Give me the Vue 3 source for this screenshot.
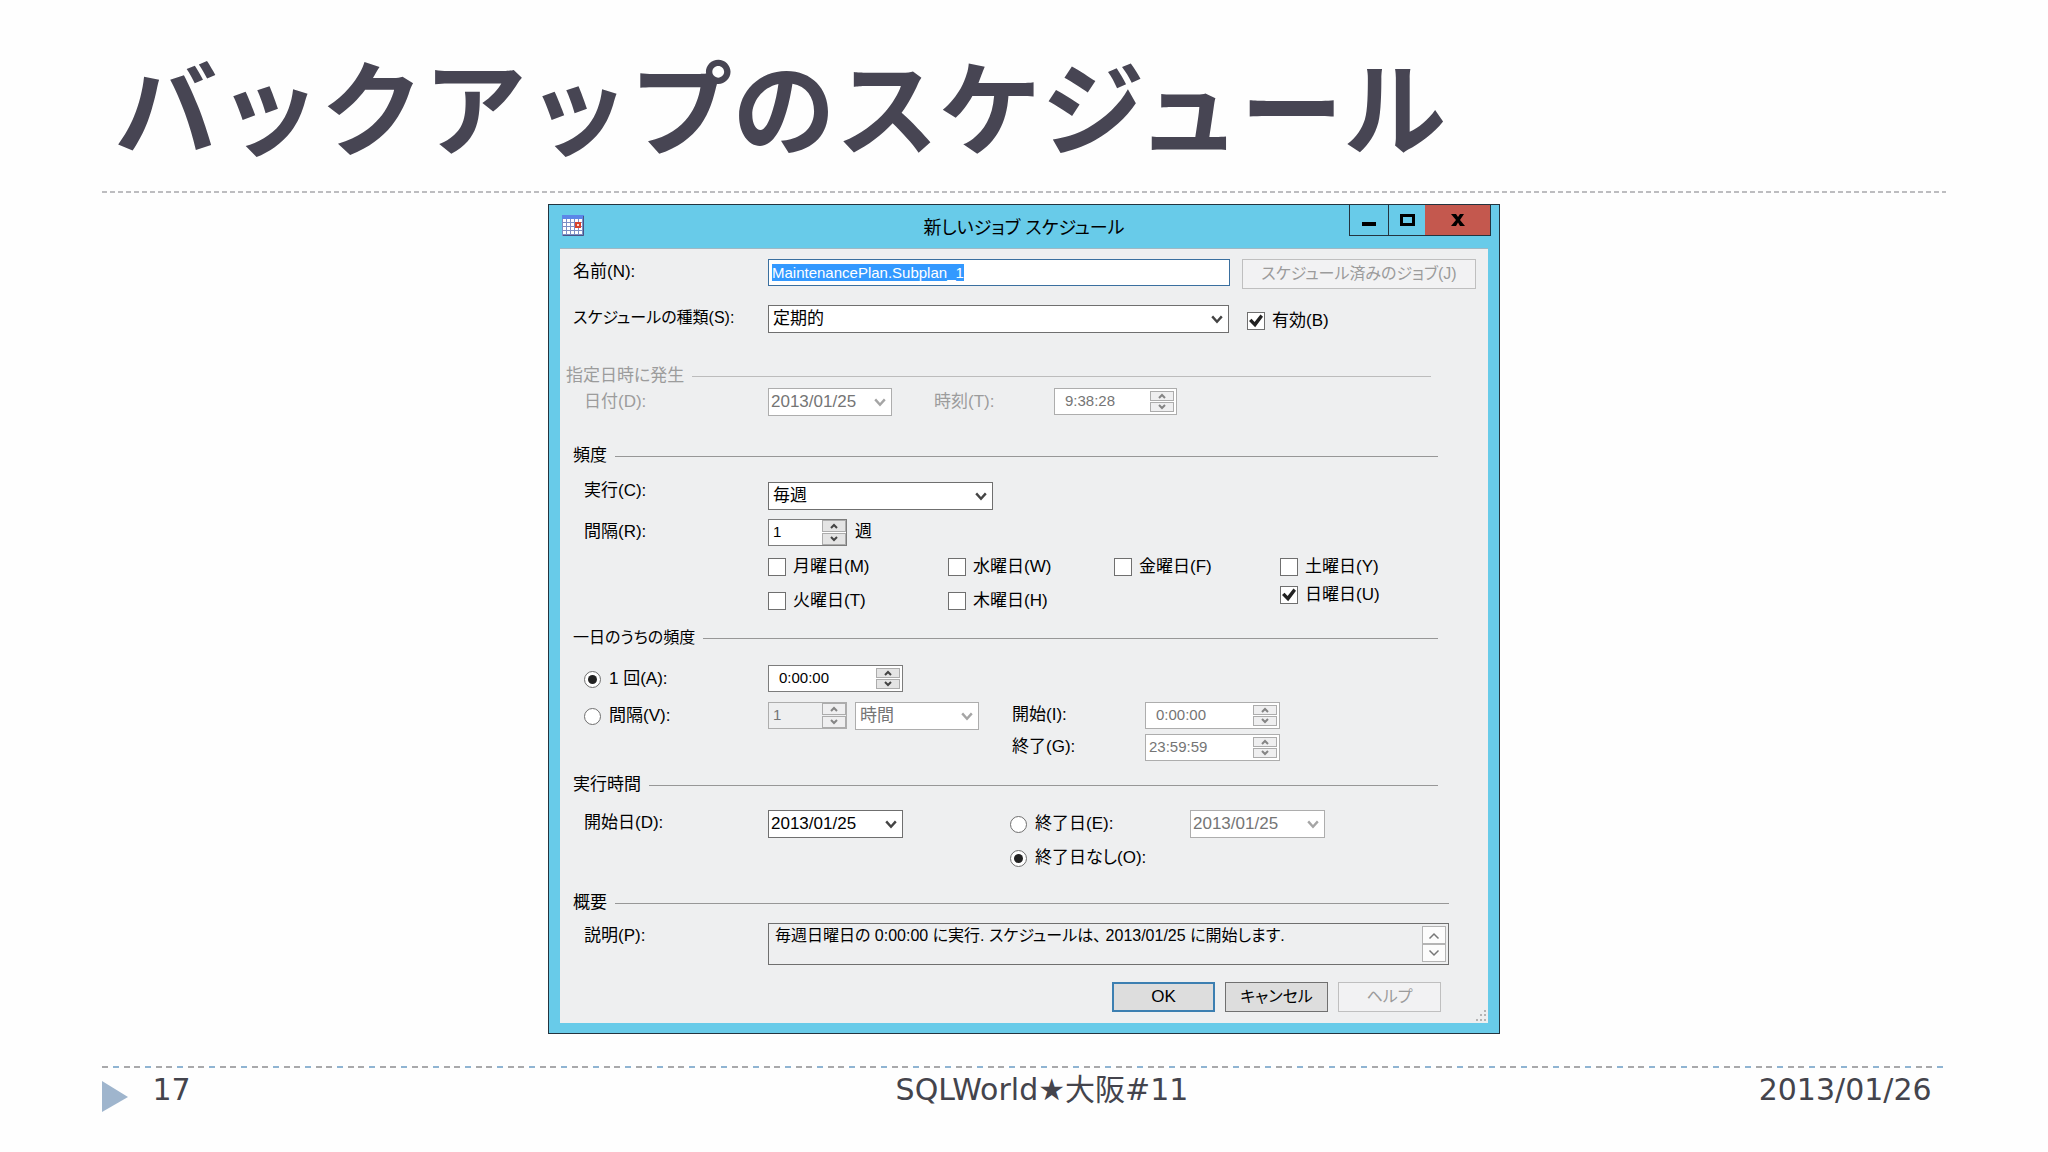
<template>
  <main class="slide">
    <header class="slide-head">
      <h1>バックアップのスケジュール</h1>
    </header>

    <section class="dialog" role="dialog" aria-labelledby="dialog-title">
      <header class="title-bar">
        <svg class="app-icon" viewBox="0 0 22 21" aria-hidden="true">
          <rect x="0" y="0" width="22" height="21" fill="#7d8fc4" />
          <rect x="0" y="0" width="22" height="4" fill="#5c86e8" />
          <g fill="#fff">
            <template v-for="row in 4" :key="row">
              <rect v-for="col in 5" :key="col" :x="col * 4 - 3" :y="row * 4" width="3" height="3" />
            </template>
          </g>
          <rect x="13" y="7" width="6" height="6" fill="#d8432c" />
          <rect x="15" y="9" width="2" height="2" fill="#ffd9c8" />
          <path d="M21.5 1V20.5H1" fill="none" stroke="#4a5384" />
        </svg>
        <h2 id="dialog-title">新しいジョブ スケジュール</h2>
        <div class="window-buttons">
          <button type="button" class="minimize" aria-label="最小化">
            <svg width="14" height="14" viewBox="0 0 14 14"><path d="M0 11H14" stroke="#000" stroke-width="4" /></svg>
          </button>
          <button type="button" class="maximize" aria-label="最大化">
            <svg width="15" height="12" viewBox="0 0 15 12"><rect x="1.5" y="1.5" width="12" height="9" fill="none" stroke="#000" stroke-width="3" /></svg>
          </button>
          <button type="button" class="close" aria-label="閉じる">
            <svg width="14" height="12" viewBox="0 0 14 12"><path d="M0 0H5L7 3L9 0H13L9 6L14 12H9L7 8.500L5 12H0L5 6Z" fill="#000" /></svg>
          </button>
        </div>
      </header>

      <form class="panel" @submit.prevent>
        <div class="row name-row">
          <label for="name">名前(N):</label>
          <input id="name" ref="nameRef" v-model="name" class="field name-field" type="text" />
          <button type="button" class="push jobs-button compact" disabled>スケジュール済みのジョブ(J)</button>
        </div>

        <div class="row type-row">
          <label class="compact" for="type">スケジュールの種類(S):</label>
          <div class="combo wide">
            <select id="type"><option>定期的</option></select>
            <svg class="chevron" viewBox="0 0 10 8"><path d="M1 1L5 5.500L9 1" /></svg>
          </div>
          <label class="tick enabled-tick"><input v-model="enabled" type="checkbox" />有効(B)</label>
        </div>

        <section class="once">
          <h3>指定日時に発生</h3>
          <div class="row date-row">
            <label class="sub" for="once-date">日付(D):</label>
            <div class="combo short disabled">
              <select id="once-date" class="date" disabled><option>2013/01/25</option></select>
              <svg class="chevron" viewBox="0 0 10 8"><path d="M1 1L5 5.500L9 1" /></svg>
            </div>
            <label class="time-label" for="once-time">時刻(T):</label>
            <div class="spin time disabled">
              <input id="once-time" type="text" value="9:38:28" disabled />
              <div class="steps">
                <button v-for="step in steps" :key="step.label" type="button" :aria-label="step.label" disabled>
                  <svg viewBox="0 0 8 6"><path :d="step.path" /></svg>
                </button>
              </div>
            </div>
          </div>
        </section>

        <section class="frequency">
          <h3>頻度</h3>
          <div class="row run-row">
            <label class="sub" for="run">実行(C):</label>
            <div class="combo medium">
              <select id="run"><option>毎週</option></select>
              <svg class="chevron" viewBox="0 0 10 8"><path d="M1 1L5 5.500L9 1" /></svg>
            </div>
          </div>
          <div class="row interval-row">
            <label class="sub" for="weeks">間隔(R):</label>
            <div class="spin count">
              <input id="weeks" type="text" value="1" />
              <div class="steps">
                <button v-for="step in steps" :key="step.label" type="button" :aria-label="step.label">
                  <svg viewBox="0 0 8 6"><path :d="step.path" /></svg>
                </button>
              </div>
            </div>
            <span class="unit">週</span>
          </div>
          <div class="days">
            <div v-for="(column, index) in dayColumns" :key="index" class="day-column">
              <label v-for="day in column" :key="day.label" class="tick">
                <input v-model="day.checked" type="checkbox" />{{ day.label }}
              </label>
            </div>
          </div>
        </section>

        <section class="daily">
          <h3 class="compact">一日のうちの頻度</h3>
          <div class="grid daily-grid">
            <label class="sub radio"><input v-model="dailyMode" type="radio" value="once" name="daily" />1 回(A):</label>
            <div class="spin time">
              <input type="text" value="0:00:00" aria-label="1 回の時刻" />
              <div class="steps">
                <button v-for="step in steps" :key="step.label" type="button" :aria-label="step.label">
                  <svg viewBox="0 0 8 6"><path :d="step.path" /></svg>
                </button>
              </div>
            </div>
          </div>
          <div class="grid daily-grid">
            <label class="sub radio"><input v-model="dailyMode" type="radio" value="every" name="daily" />間隔(V):</label>
            <div class="pair">
              <div class="spin count disabled">
                <input type="text" value="1" aria-label="間隔" disabled />
                <div class="steps">
                  <button v-for="step in steps" :key="step.label" type="button" :aria-label="step.label" disabled>
                    <svg viewBox="0 0 8 6"><path :d="step.path" /></svg>
                  </button>
                </div>
              </div>
              <div class="combo short disabled">
                <select aria-label="間隔の単位" disabled><option>時間</option></select>
                <svg class="chevron" viewBox="0 0 10 8"><path d="M1 1L5 5.500L9 1" /></svg>
              </div>
            </div>
            <label for="start-time">開始(I):</label>
            <div class="spin time disabled">
              <input id="start-time" type="text" value="0:00:00" disabled />
              <div class="steps">
                <button v-for="step in steps" :key="step.label" type="button" :aria-label="step.label" disabled>
                  <svg viewBox="0 0 8 6"><path :d="step.path" /></svg>
                </button>
              </div>
            </div>
          </div>
          <div class="grid daily-grid end-row">
            <label class="third" for="end-time">終了(G):</label>
            <div class="spin time full disabled">
              <input id="end-time" type="text" value="23:59:59" disabled />
              <div class="steps">
                <button v-for="step in steps" :key="step.label" type="button" :aria-label="step.label" disabled>
                  <svg viewBox="0 0 8 6"><path :d="step.path" /></svg>
                </button>
              </div>
            </div>
          </div>
        </section>

        <section class="duration">
          <h3>実行時間</h3>
          <div class="grid duration-grid">
            <label class="sub" for="start-date">開始日(D):</label>
            <div class="combo date-combo">
              <select id="start-date" class="date"><option>2013/01/25</option></select>
              <svg class="chevron" viewBox="0 0 10 8"><path d="M1 1L5 5.500L9 1" /></svg>
            </div>
            <label class="radio third"><input v-model="endMode" type="radio" value="date" name="end" />終了日(E):</label>
            <div class="combo date-combo disabled">
              <select class="date" aria-label="終了日" disabled><option>2013/01/25</option></select>
              <svg class="chevron" viewBox="0 0 10 8"><path d="M1 1L5 5.500L9 1" /></svg>
            </div>
            <label class="radio third no-end"><input v-model="endMode" type="radio" value="none" name="end" />終了日なし(O):</label>
          </div>
        </section>

        <section class="summary">
          <h3>概要</h3>
          <div class="row summary-row">
            <label class="sub" for="summary">説明(P):</label>
            <div class="memo">
              <textarea id="summary" class="compact" readonly rows="1" v-model="summary"></textarea>
              <div class="memo-scroll">
                <button v-for="step in steps" :key="step.label" type="button" :aria-label="step.label">
                  <svg viewBox="0 0 8 6"><path :d="step.path" /></svg>
                </button>
              </div>
            </div>
          </div>
        </section>

        <footer class="actions">
          <button type="submit" class="push default">OK</button>
          <button type="button" class="push compact">キャンセル</button>
          <button type="button" class="push compact" disabled>ヘルプ</button>
        </footer>
        <svg class="grip" viewBox="0 0 12 12" aria-hidden="true">
          <path d="M9 0h2v2h-2zM5 4h2v2h-2zM9 4h2v2h-2zM1 9h2v2h-2zM5 9h2v2h-2zM9 9h2v2h-2z" fill="#b4b4b4" />
        </svg>
      </form>
    </section>

    <footer class="slide-foot">
      <svg class="marker" viewBox="0 0 26 31" aria-hidden="true"><path d="M0 0L26 16L0 31Z" fill="#9fb5cd" /></svg>
      <span>17</span>
      <span>SQLWorld★大阪#11</span>
      <time datetime="2013-01-26">2013/01/26</time>
    </footer>
  </main>
</template>

<script setup>
import { onMounted, ref } from 'vue'

const nameRef = ref(null)
const name = ref('MaintenancePlan.Subplan_1')
const enabled = ref(true)
const dailyMode = ref('once')
const endMode = ref('none')
const summary = ref('毎週日曜日の 0:00:00 に実行. スケジュールは、 2013/01/25 に開始します.')

const steps = [
  { label: '上へ', path: 'M1 5L4 2L7 5' },
  { label: '下へ', path: 'M1 1L4 4L7 1' }
]

const dayColumns = ref([
  [{ label: '月曜日(M)', checked: false }, { label: '火曜日(T)', checked: false }],
  [{ label: '水曜日(W)', checked: false }, { label: '木曜日(H)', checked: false }],
  [{ label: '金曜日(F)', checked: false }],
  [{ label: '土曜日(Y)', checked: false }, { label: '日曜日(U)', checked: true }]
])

onMounted(() => {
  nameRef.value?.focus()
  nameRef.value?.select()
})
</script>

<style>
body {
  margin: 0;
  background: #fefefe;
}
</style>

<style scoped>
* {
  box-sizing: border-box;
}

.slide {
  padding: 0 5%;
  color: #44444c;
  font-family: "DejaVu Sans", "Noto Sans CJK JP", sans-serif;
}

.slide-head {
  height: 193px;
  padding: 36px 12px 0;
  background: repeating-linear-gradient(90deg, #bdbdc0 0 5px, transparent 5px 8px) left bottom / 100% 2px no-repeat;
}

h1 {
  margin: 0;
  color: #474553;
  font-family: "Noto Sans CJK JP", sans-serif;
  font-size: 103px;
  font-weight: 700;
  line-height: 136px;
  white-space: nowrap;
}

.dialog {
  width: 100%;
  max-width: 952px;
  margin: 11px auto 0;
  border: 1px solid #23343f;
  background: #68cbe9;
  color: #000;
  font-family: "Liberation Sans", "Noto Sans CJK JP", sans-serif;
  font-size: 17px;
  line-height: 26px;
  font-feature-settings: "palt";
}

.title-bar {
  display: grid;
  grid-template-columns: 1fr auto 1fr;
  height: 43px;
}

.app-icon {
  width: 22px;
  height: 21px;
  margin: 10px 0 0 13px;
}

h2 {
  margin: 0;
  padding-top: 4px;
  font-size: 18px;
  font-weight: 400;
  line-height: 39px;
}

.window-buttons {
  display: flex;
  justify-self: end;
  height: 31px;
  margin-right: 8px;
  border: solid #23343f;
  border-width: 0 1px 1px;
}

.window-buttons button {
  display: grid;
  place-items: center;
  padding: 0;
  border: 0;
  background: transparent;
}

.window-buttons .minimize {
  width: 39px;
  border-right: 1px solid #23343f;
}

.window-buttons .maximize {
  width: 36px;
}

.window-buttons .close {
  width: 65px;
  background: #c4584e;
}

.panel {
  position: relative;
  margin: 0 11px 10px;
  padding: 10px 12px 11px 13px;
  border-top: 1px solid #9fb8c4;
  background: #eeeff0;
}

.row {
  display: flex;
  align-items: flex-start;
}

.row > label:first-child {
  flex: 0 0 195px;
}

.row .sub,
.grid .sub {
  padding-left: 11px;
}

input,
select,
textarea,
button {
  margin: 0;
  color: inherit;
  font: inherit;
  font-feature-settings: inherit;
  border-radius: 0;
}

.field {
  min-width: 0;
  height: 27px;
  padding: 0 3px;
  border: 1px solid #3a6f9f;
  background: #fff;
  font-size: 15px;
  outline: none;
}

.name-field {
  flex: 1;
}

.name-field::selection {
  background: #3399ff;
  color: #fff;
}

.push {
  height: 30px;
  width: 103px;
  padding: 0;
  border: 1px solid #707070;
  background: #dddddd;
}

.push.default {
  border: 2px solid #3c7fb1;
}

.push:disabled {
  border-color: #bfbfbf;
  background: #f2f2f3;
  color: #9b9b9b;
}

.push.jobs-button {
  width: 234px;
  margin-left: 12px;
}

.type-row {
  margin-top: 16px;
}

.combo {
  display: grid;
  height: 27px;
}

.combo.wide {
  flex: 1;
}

.combo.medium {
  width: 225px;
}

.combo.short {
  width: 124px;
}

.combo.date-combo {
  width: 135px;
}

.combo > * {
  grid-area: 1 / 1;
}

.combo select {
  width: 100%;
  padding: 0 20px 0 4px;
  border: 1px solid #6f6f6f;
  background: #fff;
  appearance: none;
  opacity: 1;
}

.combo select.date {
  padding-left: 2px;
}

.combo.disabled select {
  border-color: #adadad;
  color: #757575;
}

.chevron {
  width: 12px;
  height: 10px;
  margin: 2px 6px 0 0;
  place-self: center end;
  pointer-events: none;
}

.chevron path,
.steps path,
.memo-scroll path {
  fill: none;
  stroke: #444;
  stroke-width: 2;
}

.disabled path {
  stroke: #a5a5a5;
}

.disabled .steps path {
  stroke: #858585;
}

.tick {
  display: flex;
  align-items: center;
  gap: 7px;
  height: 18px;
  white-space: nowrap;
}

.tick input {
  display: grid;
  flex: none;
  place-items: center;
  width: 18px;
  height: 18px;
  border: 1px solid #6f6f6f;
  background: #fff;
  appearance: none;
}

.tick input:checked::before {
  content: "";
  width: 14px;
  height: 14px;
  background: #222;
  clip-path: polygon(0 50%, 18% 34%, 40% 58%, 82% 4%, 100% 20%, 44% 94%);
}

.enabled-tick {
  width: 229px;
  margin: 7px 0 0 18px;
}

section h3 {
  display: flex;
  align-items: center;
  gap: 8px;
  margin: 0;
  font-size: 17px;
  font-weight: 400;
  line-height: 24px;
}

section h3::after {
  content: "";
  flex: 1;
  height: 1px;
  background: #979797;
}

/* kana-heavy captions run long, one size down */
.dialog .compact {
  font-size: 16px;
}

.once,
.frequency,
.daily,
.duration {
  margin-right: 38px;
}

.once {
  margin-top: 32px;
  color: #9c9c9c;
}

.once h3 {
  margin: 0 7px 0 -7px;
}

.once h3::after {
  background: #bcbcbc;
}

.date-row > label {
  padding-top: 1px;
}

.date-row .time-label {
  width: 120px;
  margin-left: 42px;
}

.spin {
  display: flex;
  height: 27px;
  border: 1px solid #7c7c7c;
  background: #fff;
}

.spin input {
  flex: 1;
  min-width: 0;
  width: 0;
  padding: 0 0 2px 4px;
  border: 0;
  background: transparent;
  font-size: 15px;
}

.spin.count {
  width: 79px;
}

.spin.time {
  width: 135px;
  padding: 2px;
}

.date-row .spin.time {
  width: 123px;
}

.spin.time input {
  padding-left: 8px;
}

.spin.time.full input {
  padding-left: 1px;
}

.spin.disabled {
  border-color: #adadad;
}

.spin.disabled input {
  color: #757575;
}

.spin.count.disabled {
  background: #eeeff0;
}

.steps {
  display: grid;
  grid-template-rows: 1fr 1fr;
  gap: 1px;
  width: 24px;
}

.steps button {
  display: grid;
  place-items: center;
  padding: 0;
  border: 1px solid #acacac;
  background: #e4e4e4;
}

.disabled .steps button {
  background: #efeff0;
}

.steps svg {
  width: 8px;
  height: 6px;
}

.frequency {
  margin-top: 29px;
}

.run-row {
  margin-top: 14px;
}

.run-row > label {
  line-height: 18px;
}

.interval-row {
  margin-top: 10px;
}

.interval-row .unit {
  margin-left: 8px;
}

.days {
  display: grid;
  grid-template-columns: 180px 166px 166px 1fr;
  margin: 12px 0 0 195px;
}

.day-column {
  display: grid;
  align-content: start;
  row-gap: 16px;
}

.day-column:last-child {
  row-gap: 10px;
}

.daily {
  margin-top: 16px;
}

.grid {
  display: grid;
  align-items: start;
}

.daily-grid {
  grid-template-columns: 195px 244px 133px 1fr;
  margin-top: 9px;
}

.daily h3 + .daily-grid {
  margin-top: 15px;
}

.daily-grid.end-row {
  margin-top: 4px;
}

.third {
  grid-column: 3;
}

.radio {
  display: flex;
  align-items: center;
  gap: 8px;
  height: 28px;
  white-space: nowrap;
}

.radio input {
  display: grid;
  flex: none;
  place-items: center;
  width: 17px;
  height: 17px;
  border: 1px solid #6f6f6f;
  border-radius: 50%;
  background: #fff;
  appearance: none;
}

.radio input:checked::before {
  content: "";
  width: 9px;
  height: 9px;
  border-radius: 50%;
  background: #222;
}

.pair {
  display: flex;
  gap: 8px;
}

.duration {
  margin-top: 12px;
}

.duration-grid {
  grid-template-columns: 195px 242px 180px 1fr;
  row-gap: 6px;
  margin-top: 13px;
}

.no-end {
  grid-column: 3 / -1;
}

.summary {
  margin: 19px 27px 0 0;
}

.summary-row {
  margin-top: 8px;
}

.memo {
  display: flex;
  flex: 1;
  height: 42px;
  padding: 2px;
  border: 1px solid #6f6f6f;
}

.memo textarea {
  flex: 1;
  padding: 0 4px;
  border: 0;
  background: transparent;
  line-height: 20px;
  resize: none;
  overflow: hidden;
  outline: none;
}

.memo-scroll {
  display: grid;
  width: 24px;
}

.memo-scroll button {
  display: grid;
  place-items: center;
  padding: 0;
  border: 1px solid #b4b4b4;
  background: #fcfcfc;
}

.memo-scroll svg {
  width: 12px;
  height: 9px;
}

.memo-scroll path {
  stroke: #777;
  stroke-width: 1;
}

.actions {
  display: flex;
  justify-content: flex-end;
  gap: 10px;
  margin: 17px 35px 0 0;
}

.grip {
  position: absolute;
  right: 1px;
  bottom: 1px;
  width: 12px;
  height: 12px;
}

.slide-foot {
  display: grid;
  grid-template-columns: 50px 1fr auto 1fr;
  align-items: start;
  margin-top: 32px;
  padding: 6px 14px 0 0;
  background: repeating-linear-gradient(90deg, #a9a9ab 0 6px, transparent 6px 11px, #8fb4d2 11px 17px, transparent 17px 22px, #a9a9ab 22px 28px, transparent 28px 32px) left top / 100% 2px no-repeat;
  font-size: 30px;
  line-height: 36px;
}

.marker {
  width: 26px;
  height: 31px;
  margin-top: 9px;
}

.slide-foot time {
  text-align: right;
}
</style>
